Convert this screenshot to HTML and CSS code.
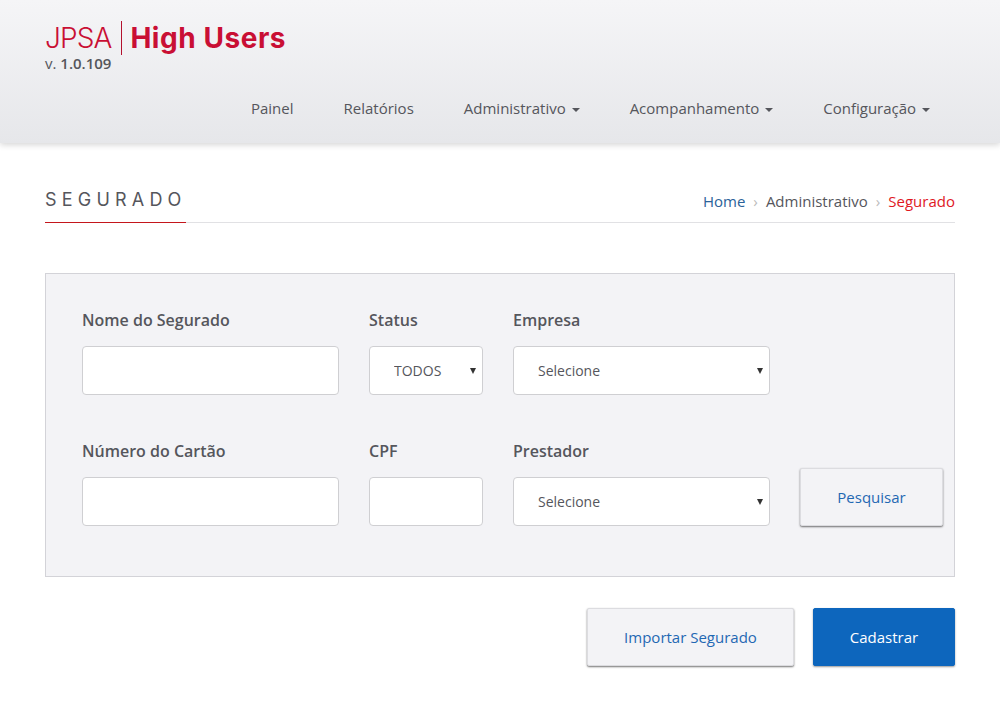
FILE: index.html
```html
<!DOCTYPE html>
<html lang="pt-BR">
<head>
<meta charset="UTF-8">
<meta name="viewport" content="width=device-width, initial-scale=1.0">
<title>High Users - Segurado</title>
<link rel="stylesheet" href="styles.css">
</head>
<body>

<header class="topbar">
    <div class="brand">
        <div class="logo">
            <span class="logo-light">JPSA</span>
            <span class="logo-bold">High Users</span>
        </div>
        <div class="version">v. <b>1.0.109</b></div>
    </div>
    <nav class="menu">
        <a href="#">Painel</a>
        <a href="#">Relatórios</a>
        <a href="#">Administrativo <i class="caret"></i></a>
        <a href="#">Acompanhamento <i class="caret"></i></a>
        <a href="#">Configuração <i class="caret"></i></a>
    </nav>
</header>

<main class="content">
    <div class="page-head">
        <h1>Segurado</h1>
        <div class="crumbs">
            <a href="#">Home</a>
            <span class="sep">›</span>
            <span>Administrativo</span>
            <span class="sep">›</span>
            <span class="current">Segurado</span>
        </div>
    </div>

    <form class="filters">
        <div class="field">
            <label for="nome">Nome do Segurado</label>
            <input type="text" id="nome">
        </div>
        <div class="field">
            <label for="status">Status</label>
            <select id="status"><option>TODOS</option></select>
        </div>
        <div class="field">
            <label for="empresa">Empresa</label>
            <select id="empresa"><option>Selecione</option></select>
        </div>
        <div></div>

        <div class="field">
            <label for="cartao">Número do Cartão</label>
            <input type="text" id="cartao">
        </div>
        <div class="field">
            <label for="cpf">CPF</label>
            <input type="text" id="cpf">
        </div>
        <div class="field">
            <label for="prestador">Prestador</label>
            <select id="prestador"><option>Selecione</option></select>
        </div>
        <button type="button" class="btn btn-light">Pesquisar</button>
    </form>

    <div class="actions">
        <button type="button" class="btn btn-light btn-import">Importar Segurado</button>
        <button type="button" class="btn btn-blue">Cadastrar</button>
    </div>
</main>

</body>
</html>
```

FILE: styles.css
```css
* {
    box-sizing: border-box;
}
body {
    font-family: "Open Sans", Arial, sans-serif;
    font-size: 15px;
    color: #55565c;
    background-color: #fff;
    margin: 0;
    padding: 0;
}
a {
    text-decoration: none;
    color: inherit;
}

.topbar {
    height: 143px;
    padding: 21px 45px 0;
    background: linear-gradient(#f5f5f7, #e6e7ea);
    box-shadow: 0 2px 6px rgba(0, 0, 0, 0.16);
}
.logo {
    display: flex;
    align-items: center;
    height: 34px;
    color: #c90f34;
    font-family: Inter, "Liberation Sans", sans-serif;
    font-size: 28px;
}
.logo-light {
    font-weight: 300;
    letter-spacing: -0.9px;
    padding-right: 10px;
    border-right: 1px solid #b3112e;
    line-height: 34px;
}
.logo-bold {
    font-weight: 700;
    letter-spacing: 0.55px;
    padding-left: 8px;
}
.version {
    font-size: 15px;
    line-height: 16px;
    color: #55565c;
}
.version b {
    font-weight: 600;
}
.menu {
    display: flex;
    justify-content: flex-end;
    gap: 50px;
    margin-top: 27px;
    padding-right: 25px;
    line-height: 20px;
}
.caret {
    display: inline-block;
    width: 0;
    height: 0;
    margin-left: 2px;
    vertical-align: middle;
    border-top: 4px solid #55565c;
    border-left: 4px solid transparent;
    border-right: 4px solid transparent;
}

.content {
    padding: 0 45px 36px;
}
.page-head {
    display: flex;
    justify-content: space-between;
    align-items: flex-end;
    height: 80px;
    border-bottom: 1px solid #e1e1e4;
}
.page-head h1 {
    margin: 0 0 -1px;
    width: 141px;
    height: 33px;
    font-size: 18px;
    line-height: 20px;
    font-weight: 400;
    letter-spacing: 5.2px;
    white-space: nowrap;
    text-transform: uppercase;
    color: #55565c;
    font-family: Inter, "Liberation Sans", sans-serif;
    border-bottom: 1px solid #c4161c;
}
.crumbs {
    display: flex;
    gap: 8px;
    padding-bottom: 11px;
    line-height: 20px;
}
.crumbs a {
    color: #2b6299;
}
.crumbs .sep {
    color: #bbb;
}
.crumbs .current {
    color: #e0191f;
}

.filters {
    display: grid;
    grid-template-columns: 257px 114px 257px 143px;
    column-gap: 30px;
    row-gap: 44px;
    align-items: end;
    align-content: start;
    margin-top: 50px;
    height: 304px;
    padding: 34px 0 0 36px;
    background-color: #f3f3f6;
    border: 1px solid #d3d3d8;
}
.field label {
    display: block;
    margin-bottom: 14px;
    font-size: 16px;
    line-height: 24px;
    font-weight: 600;
    color: #55565c;
}
.field input, .field select {
    display: block;
    width: 100%;
    height: 49px;
    border: 1px solid #cfcfd2;
    border-radius: 4px;
    background-color: #fff;
    font-family: "Open Sans", Arial, sans-serif;
    font-size: 14px;
    color: #55565c;
}
.field select {
    appearance: none;
    padding-left: 24px;
    background-image: url("data:image/svg+xml,%3Csvg xmlns='http://www.w3.org/2000/svg' width='6' height='6'%3E%3Cpath d='M0 0h6L3 6z' fill='%23333'/%3E%3C/svg%3E");
    background-repeat: no-repeat;
    background-position: right 6px center;
}

.btn {
    height: 58px;
    border: 1px solid #dcdce0;
    border-radius: 2px;
    font-family: "Open Sans", Arial, sans-serif;
    font-size: 15px;
    cursor: pointer;
}
.btn-light {
    background-color: #f3f3f6;
    color: #1f68b3;
    box-shadow: 0 1px 2px rgba(0, 0, 0, 0.55);
}
.btn-blue {
    width: 142px;
    background-color: #0d66bd;
    border-color: #0d66bd;
    color: #fff;
    box-shadow: 0 1px 2px rgba(0, 0, 0, 0.4);
}
.btn-import {
    width: 207px;
}
.actions {
    display: flex;
    justify-content: flex-end;
    gap: 19px;
    margin-top: 31px;
}
```
